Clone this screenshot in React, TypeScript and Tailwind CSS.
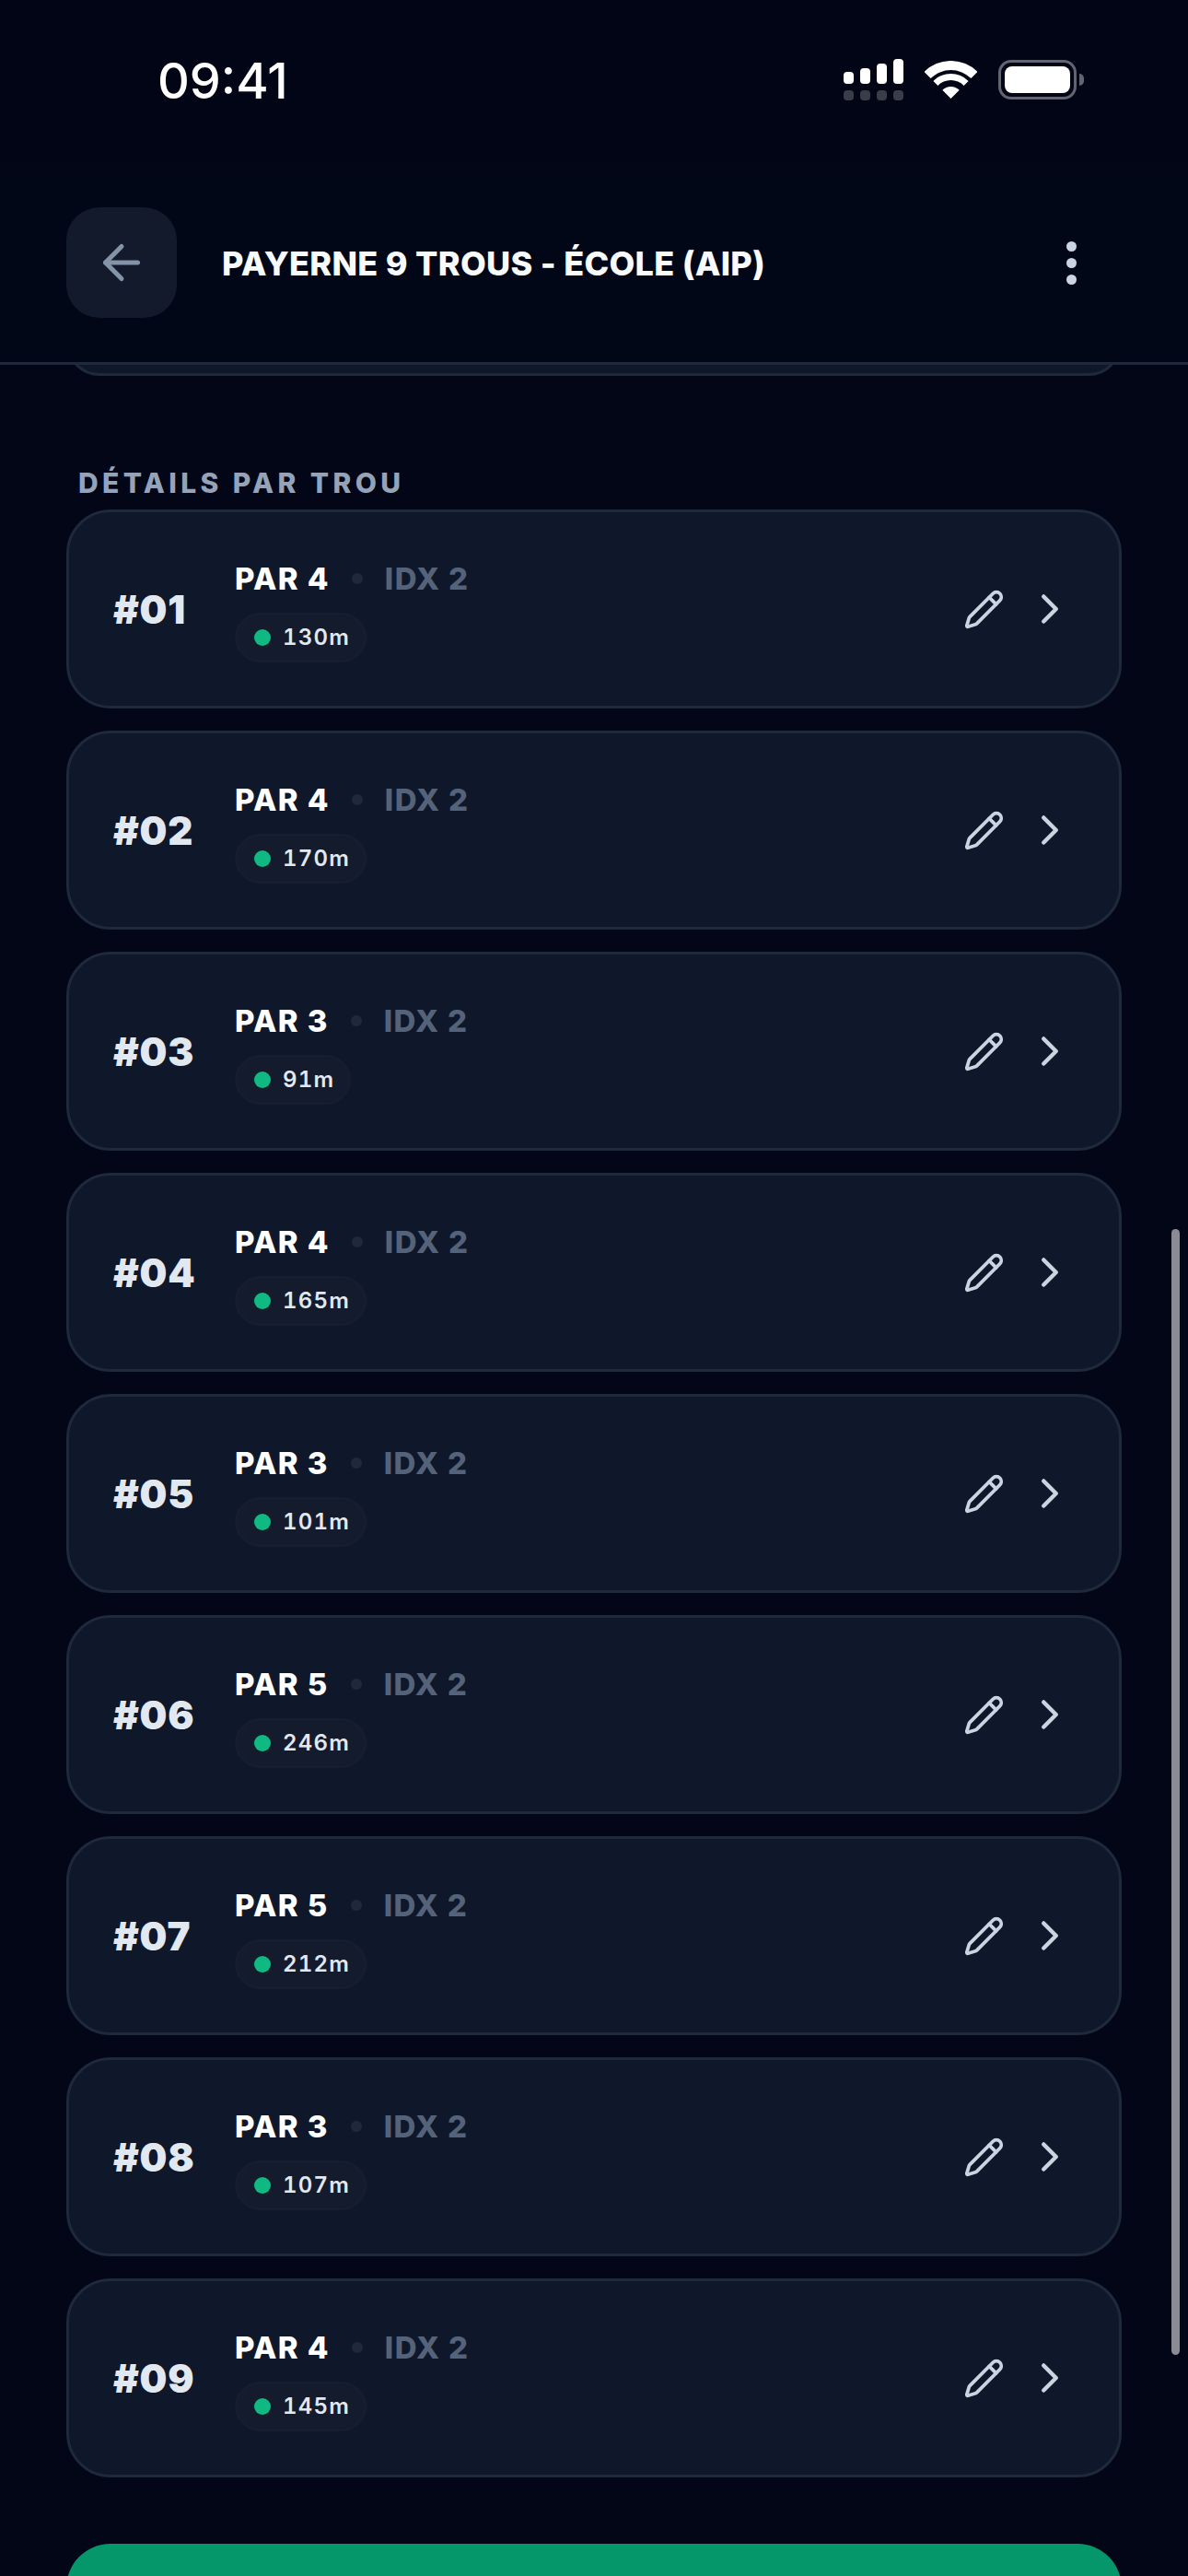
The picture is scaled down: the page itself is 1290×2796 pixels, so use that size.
import { ArrowLeft, ChevronRight, Pencil } from 'lucide-react';

const holes = [
  { no: '#01', par: 4, dist: '130m' },
  { no: '#02', par: 4, dist: '170m' },
  { no: '#03', par: 3, dist: '91m' },
  { no: '#04', par: 4, dist: '165m' },
  { no: '#05', par: 3, dist: '101m' },
  { no: '#06', par: 5, dist: '246m' },
  { no: '#07', par: 5, dist: '212m' },
  { no: '#08', par: 3, dist: '107m' },
  { no: '#09', par: 4, dist: '145m' },
];

function StatusIcons() {
  return (
    <div className="mt-[6px] flex h-[45px] items-center gap-[23px]">
      <svg width="65" height="45" viewBox="0 0 65 45" fill="white">
        <rect x="0" y="14" width="11" height="13" rx="4" />
        <rect x="18" y="10" width="11" height="17" rx="4" />
        <rect x="36" y="5" width="11" height="22" rx="4" />
        <rect x="54" y="0" width="11" height="27" rx="4" />
        <g opacity="0.22">
          <rect x="0" y="34" width="11" height="11" rx="4" />
          <rect x="18" y="34" width="11" height="11" rx="4" />
          <rect x="36" y="34" width="11" height="11" rx="4" />
          <rect x="54" y="34" width="11" height="11" rx="4" />
        </g>
      </svg>
      <svg width="57" height="41" viewBox="0 0 57 41" fill="white">
        <path d="M-0.5 12 A41 41 0 0 1 57.5 12 L50.4 19.1 A31 31 0 0 0 6.6 19.1 Z" />
        <path d="M9.4 21.9 A27 27 0 0 1 47.6 21.9 L42.6 26.9 A20 20 0 0 0 14.4 26.9 Z" />
        <path d="M19.3 31.8 A13 13 0 0 1 37.7 31.8 L28.5 41 Z" />
      </svg>
      <div className="flex items-center gap-[3px]">
        <div className="flex h-[43px] w-[85px] items-center justify-center rounded-[14px] border-[3px] border-[#62646f]">
          <div className="h-[29px] w-[71px] rounded-[8px] bg-white" />
        </div>
        <div className="h-[13px] w-[5px] rounded-r-full bg-[#62646f]" />
      </div>
    </div>
  );
}

function HoleRow({ no, par, dist }: { no: string; par: number; dist: string }) {
  return (
    <div className="flex h-[216px] items-center rounded-[48px] border-[3px] border-[#1e293b] bg-[#0f172a] px-[48px]">
      <div className="w-[132px] pt-[2px] text-[42px] leading-none font-black tracking-[0.8px] text-[#e2e8f0]">{no}</div>
      <div className="flex flex-col items-start gap-[15px] pt-[1px]">
        <div className="flex items-center gap-[24px] pt-[1px] text-[33px] leading-[44px] font-extrabold tracking-[1.4px]">
          <span className="text-white">PAR {par}</span>
          <span className="h-[12px] w-[12px] rounded-full bg-[#1e293b]" />
          <span className="text-[#55637a]">IDX 2</span>
        </div>
        <div className="flex h-[54px] items-center gap-[13px] rounded-full border-[3px] border-[#151e30] bg-[#131b2c] pr-[15px] pl-[18px]">
          <span className="h-[18px] w-[18px] rounded-full bg-[#10b981]" />
          <span className="text-[24px] leading-none font-semibold tracking-[1.2px] text-[#e2e8f0] tabular-nums">{dist}</span>
        </div>
      </div>
      <div className="ml-auto flex items-center gap-[22px] text-[#cbd5e1]">
        <Pencil size={45} strokeWidth={2} />
        <ChevronRight size={54} strokeWidth={2} />
      </div>
    </div>
  );
}

export default function App() {
  return (
    <div className="relative h-[2796px] w-[1290px] overflow-hidden bg-[#020617] font-['Inter',sans-serif]">
      <div className="relative z-10 flex h-[177px] items-start justify-between bg-[#010515] pt-[58px] pr-[113px] pl-[171px]">
        <span className="text-[54px] leading-[60px] font-medium text-white">09:41</span>
        <StatusIcons />
      </div>
      <header className="relative z-10 flex h-[219px] items-center border-b-[3px] border-[#1e293b] bg-[#020717] px-[72px]">
        <button className="flex h-[120px] w-[120px] items-center justify-center rounded-[36px] bg-[#131a2b] text-[#8493a8]">
          <ArrowLeft size={60} strokeWidth={2} />
        </button>
        <h1 className="ml-[49px] pt-[2px] text-[36px] leading-none font-extrabold tracking-[0.3px] text-[#f8fafc]">PAYERNE 9 TROUS - ÉCOLE (AIP)</h1>
        <div className="mr-[49px] ml-auto flex flex-col gap-[7px]">
          <span className="h-[11px] w-[11px] rounded-full bg-[#cbd5e1]" />
          <span className="h-[11px] w-[11px] rounded-full bg-[#cbd5e1]" />
          <span className="h-[11px] w-[11px] rounded-full bg-[#cbd5e1]" />
        </div>
      </header>
      <main className="px-[72px]">
        <div className="-mt-[60px] h-[72px] rounded-[48px] border-[3px] border-[#1e293b] bg-[#0f172a]" />
        <h2 className="mt-[98px] ml-[13px] text-[30px] leading-[36px] font-extrabold tracking-[4.4px] text-[#94a3b8]">DÉTAILS PAR TROU</h2>
        <div className="mt-[11px] flex flex-col gap-[24px]">
          {holes.map((h) => (
            <HoleRow key={h.no} {...h} />
          ))}
        </div>
        <div className="mt-[72px] h-[168px] rounded-[48px] bg-[#059669]" />
      </main>
      <div className="absolute top-[1334px] right-[9px] h-[1222px] w-[9px] rounded-full bg-[#8a8b94]" />
    </div>
  );
}
